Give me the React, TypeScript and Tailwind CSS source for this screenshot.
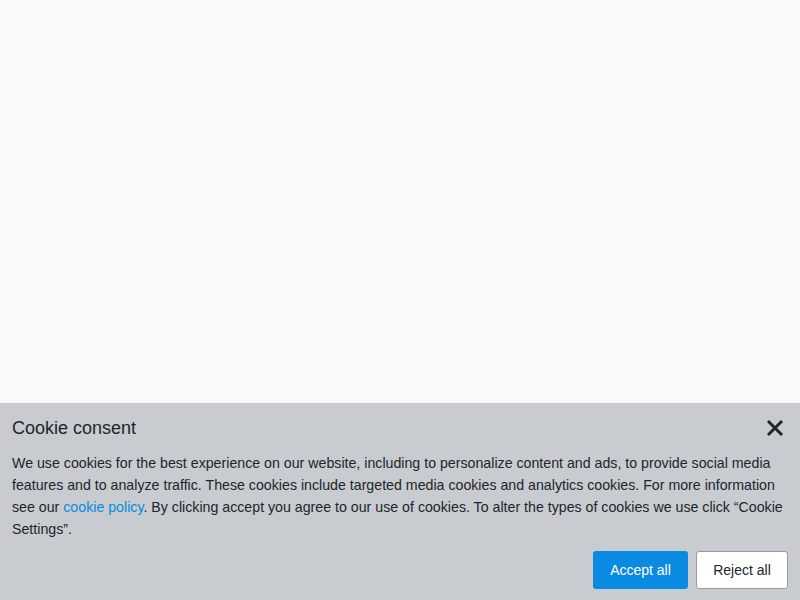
export default function App() {
  return (
    <div className="h-[600px] w-full bg-[#f8f9fa] flex flex-col justify-end font-['Liberation_Sans',Arial,sans-serif] text-[#212529]">
      <div className="bg-[#c8ccd0] px-3 pt-[14px] pb-[11px]">
        <div className="flex items-center justify-between">
          <h2 className="text-[18px] leading-[22px]">Cookie consent</h2>
          <button className="mr-[4px] text-[#212529]" aria-label="Close">
            <svg width="18" height="18" viewBox="0 0 18 18">
              <path d="M2 2L16 16M16 2L2 16" stroke="currentColor" strokeWidth="3" />
            </svg>
          </button>
        </div>
        <p className="mt-[13px] text-[14.2px] leading-[22px]">
          We use cookies for the best experience on our website, including to personalize content and ads, to provide social media
          features and to analyze traffic. These cookies include targeted media cookies and analytics cookies. For more information
          see our <a className="text-[#0a8ae0]">cookie policy</a>. By clicking accept you agree to our use of cookies. To alter the types of cookies we use click “Cookie
          Settings”.
        </p>
        <div className="mt-[11px] flex justify-end gap-2">
          <button className="h-[38px] w-[95px] rounded-[3px] bg-[#0a8be2] text-[14px] text-white">Accept all</button>
          <button className="h-[38px] w-[92px] rounded-[3px] border border-[#9a9a9a] bg-white text-[14px] text-[#212529]">Reject all</button>
        </div>
      </div>
    </div>
  );
}
